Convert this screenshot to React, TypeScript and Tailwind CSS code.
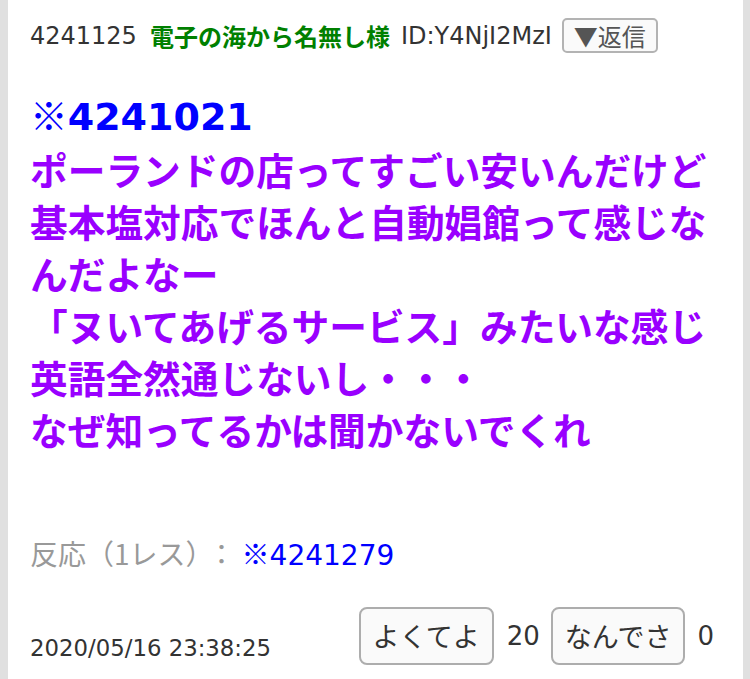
export default function App() {
  const lines = [
    'ポーランドの店ってすごい安いんだけど',
    '基本塩対応でほんと自動娼館って感じな',
    'んだよなー',
    '「ヌいてあげるサービス」みたいな感じ',
    '英語全然通じないし・・・',
    'なぜ知ってるかは聞かないでくれ',
  ]

  return (
    <div className="min-h-screen bg-[#e0e0e0] pl-[8px] pr-[7px] font-['DejaVu_Sans','Noto_Sans_CJK_JP',sans-serif]">
      <div className="bg-white min-h-[679px] pl-[22px] pr-[29px]">
        {/* header */}
        <div className="flex items-center pt-[18px] text-[24px] leading-none text-[#333]">
          <span>4241125</span>
          <span className="ml-[13px] font-bold text-[#008000] font-['Noto_Sans_CJK_JP',sans-serif]">電子の海から名無し様</span>
          <span className="ml-[11px]">ID:Y4NjI2MzI</span>
          <button className="ml-[10px] h-[35px] px-[10px] border-2 border-[#b3b3b3] rounded-[5px] bg-[#fafafa] text-[#555] text-[24px] leading-none font-['Noto_Sans_CJK_JP',sans-serif]">
            ▼返信
          </button>
        </div>

        {/* body */}
        <div className="mt-[35px] text-[37.7px] leading-[52px] font-bold text-[#9900ff] font-['Noto_Sans_CJK_JP',sans-serif] whitespace-nowrap">
          <a className="block text-[#0000ff]">
            ※<span className="font-['DejaVu_Sans',sans-serif] text-[38px]">4241021</span>
          </a>
          {lines.map((l) => (
            <div key={l}>{l}</div>
          ))}
        </div>

        {/* reactions */}
        <div className="mt-[80px] text-[28px] leading-[36px] text-[#999] font-['Noto_Sans_CJK_JP',sans-serif]">
          反応（1レス）<span className="ml-[8px]">：</span>
          <a className="ml-[6px] text-[#0000ff]">※<span className="font-['DejaVu_Sans',sans-serif]">4241279</span></a>
        </div>

        {/* footer */}
        <div className="mt-[33px] flex items-end justify-between">
          <span className="mb-[2px] text-[22.8px] leading-[30px] text-[#333]">2020/05/16 23:38:25</span>
          <div className="flex items-center text-[26px] text-[#333]">
            <button className="h-[58px] px-[12px] border-2 border-[#adadad] rounded-[8px] bg-[#fafafa] text-[27px] text-[#333] font-['Noto_Sans_CJK_JP',sans-serif]">
              よくてよ
            </button>
            <span className="ml-[13px] mr-[11px]">20</span>
            <button className="h-[58px] px-[12px] border-2 border-[#adadad] rounded-[8px] bg-[#fafafa] text-[27px] text-[#333] font-['Noto_Sans_CJK_JP',sans-serif]">
              なんでさ
            </button>
            <span className="ml-[12px]">0</span>
          </div>
        </div>
      </div>
    </div>
  )
}
